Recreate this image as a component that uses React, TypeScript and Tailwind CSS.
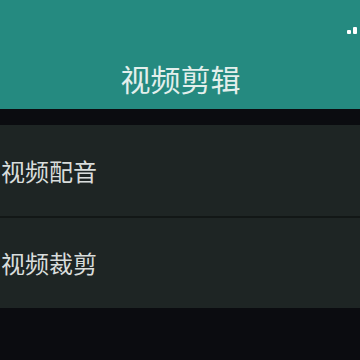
import React from "react";

export default function App() {
  const font = { fontFamily: '"Noto Sans CJK SC", "Noto Sans", sans-serif' };
  return (
    <div className="w-[360px] h-[360px] bg-[#0b0c10] overflow-hidden flex flex-col" style={font}>
      <div className="h-[109px] bg-[#258a80] relative flex flex-col">
        <div className="absolute right-[3px] top-[27px] flex items-end gap-[2px]">
          <div className="w-[4px] h-[4px] bg-white rounded-[1px]" />
          <div className="w-[4px] h-[7px] bg-white rounded-[1px]" />
        </div>
        <div className="flex-1" />
        <div className="h-[50px] flex items-center justify-center text-[30px] text-[#e3efec] leading-none pb-[12px] pl-[1px]">
          视频剪辑
        </div>
      </div>
      <div className="h-[16px]" />
      <div className="flex flex-col bg-[#1e2524]">
        <div className="h-[91px] flex items-center text-[24px] text-[#d9dddc] leading-none pl-[1px]">
          视频配音
        </div>
        <div className="h-[2px] bg-[#121716]" />
        <div className="h-[90px] flex items-center text-[24px] text-[#d9dddc] leading-none pl-[1px]">
          视频裁剪
        </div>
      </div>
    </div>
  );
}
